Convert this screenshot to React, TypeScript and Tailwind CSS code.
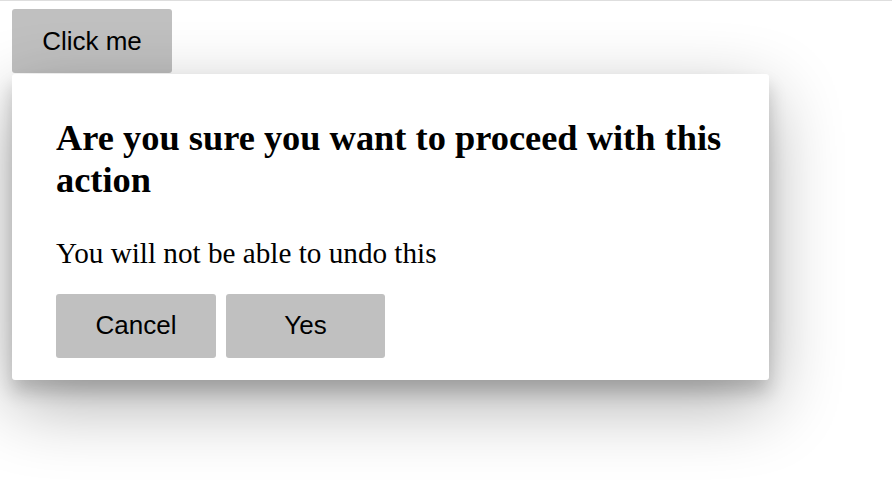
import React from "react";

export default function App() {
  return (
    <div className="min-h-screen bg-white border-t border-[#dedede] pl-[12px] pt-[8px] font-['Liberation_Sans',Arial,sans-serif]">
      <button className="block w-[160px] h-[64px] bg-[#c0c0c0] rounded-[3px] text-[26px] text-black font-['Liberation_Sans',Arial,sans-serif]">
        Click me
      </button>
      <div className="relative mt-[1px] w-[757px] bg-white rounded-[3px] pt-[44px] pl-[44px] pr-[44px] pb-[22px] shadow-[0_24px_72px_rgba(0,0,0,0.32),0_12px_18px_rgba(0,0,0,0.18)]">
        <h1 className="text-[36.4px] leading-[41.6px] font-bold text-black font-['Liberation_Serif','Times_New_Roman',serif]">
          Are you sure you want to proceed with this action
        </h1>
        <p className="mt-[36px] text-[29.2px] leading-[33.5px] text-black font-['Liberation_Serif','Times_New_Roman',serif]">
          You will not be able to undo this
        </p>
        <div className="mt-[23px] flex gap-[10px]">
          <button className="w-[160px] h-[64px] bg-[#c0c0c0] rounded-[3px] text-[26px] text-black font-['Liberation_Sans',Arial,sans-serif]">
            Cancel
          </button>
          <button className="w-[159px] h-[64px] bg-[#c0c0c0] rounded-[3px] text-[26px] text-black font-['Liberation_Sans',Arial,sans-serif]">
            Yes
          </button>
        </div>
      </div>
    </div>
  );
}
